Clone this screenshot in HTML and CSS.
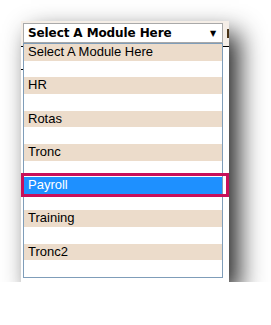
FILE: index.html
```html
<!DOCTYPE html>
<html lang="en">
<head>
    <meta charset="UTF-8">
    <title>Module Select</title>
    <link rel="stylesheet" href="styles.css">
</head>
<body>
<div class="shot">
    <!-- Select box -->
    <div class="top-row">
        <div class="select">
            <span>Select A Module Here</span>
            <span class="arrow">&#9660;</span>
        </div>
        <span class="peek"></span>
    </div>

    <!-- Open dropdown -->
    <div class="list">
        <div class="option">Select A Module Here</div>
        <div class="option">HR</div>
        <div class="option">Rotas</div>
        <div class="option">Tronc</div>
        <div class="option active">Payroll</div>
        <div class="option">Training</div>
        <div class="option">Tronc2</div>
    </div>

    <div class="highlight"></div>
</div>
</body>
</html>
```

FILE: styles.css
```css
*{
    margin: 0;
    padding: 0;
    box-sizing: border-box;
}
body {
    background: #fff;
    padding: 21px 0 0 21px;
}

/* Screenshot card */
.shot {
    position: relative;
    width: 208px;
    height: 261px;
    padding: 2px 0 0 2px;
    background:
        linear-gradient(#000, #000) 0 25px / 100% 1px no-repeat,
        linear-gradient(#000, #000) 0 48px / 3px 1px no-repeat,
        linear-gradient(#f5eee7, #f5eee7) 0 0 / 100% 25px no-repeat,
        #fff;
    box-shadow: 10px 12px 24px rgba(0, 0, 0, 0.85);
    overflow: hidden;
}

/* Select */
.top-row {
    display: flex;
    align-items: center;
    gap: 4px;
}
.select {
    width: 200px;
    height: 20px;
    border: 1px solid #a9a9a9;
    background: #fff;
    display: flex;
    align-items: center;
    justify-content: space-between;
    padding: 0 6px 0 4px;
    font-family: "DejaVu Sans", sans-serif;
    font-weight: bold;
    font-size: 12px;
    letter-spacing: -0.1px;
    color: #000;
    flex-shrink: 0;
}
.arrow {
    font-size: 8px;
}
.peek {
    width: 3px;
    height: 9px;
    background: #4a3416;
}

/* Dropdown list */
.list {
    width: 200px;
    height: 235px;
    border: 1px solid #7f9db9;
    background: #fff;
    font-family: "Liberation Sans", Arial, sans-serif;
    font-size: 13px;
    color: #000;
}
.option {
    height: 16.7px;
    line-height: 16.7px;
    margin-bottom: 16.6px;
    padding-left: 4px;
    background: #ecdccb;
}
.option.active {
    background: #1e90ff;
    color: #fff;
}

/* Annotation frame */
.highlight {
    position: absolute;
    left: 0;
    top: 152px;
    width: 208px;
    height: 24px;
    border: 3px solid #c8105a;
}
```
